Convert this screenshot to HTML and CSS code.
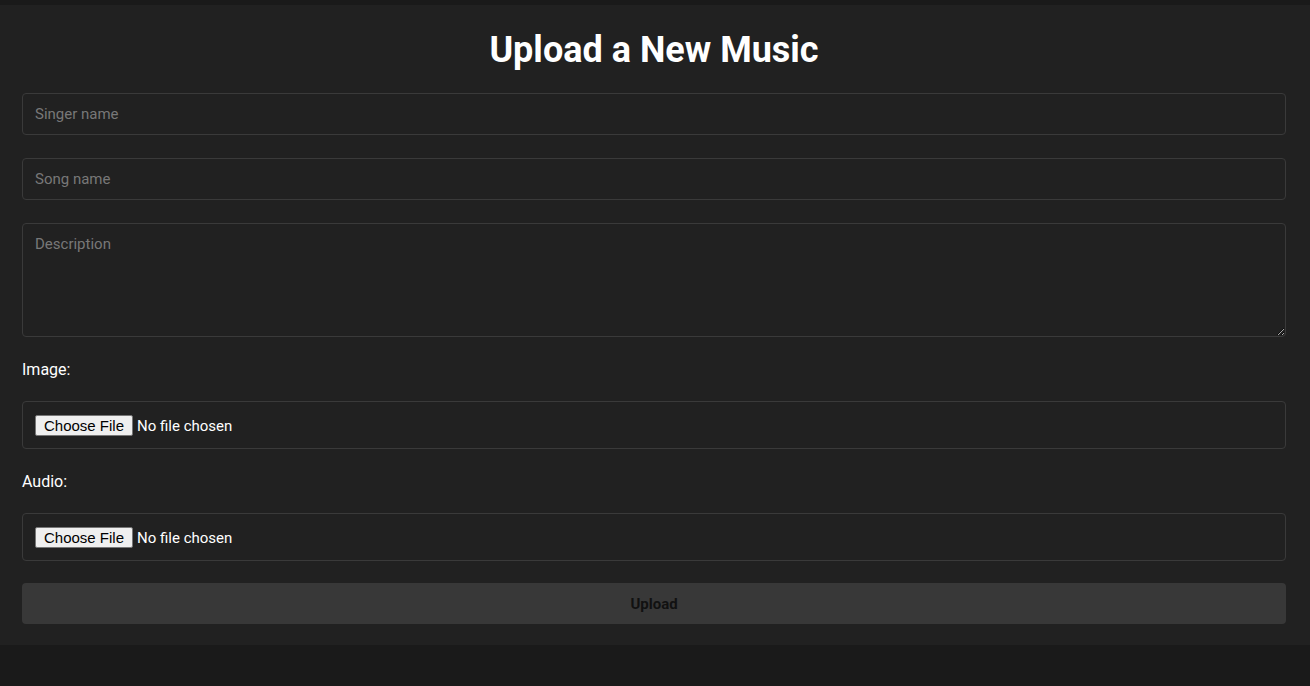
FILE: index.html
```html
<!DOCTYPE html>
<html lang="en">
<head>
<meta charset="utf-8">
<title>Upload a New Music</title>
<link rel="stylesheet" href="styles.css">
</head>
<body>
<main class="panel">
  <h1 class="title">Upload a New Music</h1>
  <form class="form">
    <input class="field" type="text" placeholder="Singer name">
    <input class="field" type="text" placeholder="Song name">
    <textarea class="field area" placeholder="Description"></textarea>
    <label class="label" for="img">Image:</label>
    <div class="filebox"><input id="img" class="file" type="file"></div>
    <label class="label" for="aud">Audio:</label>
    <div class="filebox"><input id="aud" class="file" type="file"></div>
    <button class="submit" type="button">Upload</button>
  </form>
</main>
</body>
</html>
```
FILE: styles.css
```css
html, body {
  margin: 0;
  padding: 0;
  background: #1a1a1a;
  font-family: Roboto, "Noto Sans", Arial, sans-serif;
  color: #ffffff;
}
.panel {
  margin-top: 5px;
  background: #212121;
  padding: 24px 24px 21px 22px;
}
.title {
  margin: 0 0 22px;
  text-align: center;
  font-size: 36px;
  font-weight: 700;
  line-height: 42px;
  color: #ffffff;
}
.form {
  display: flex;
  flex-direction: column;
  gap: 22px;
}
.field {
  box-sizing: border-box;
  width: 100%;
  height: 42px;
  margin: 0 0 1px;
  padding: 0 12px;
  background: #212121;
  border: 1px solid #3a3a3a;
  border-radius: 4px;
  color: #ffffff;
  font-family: Roboto, sans-serif;
  font-size: 15px;
  outline: none;
}
.field::placeholder {
  color: #787878;
}
.area {
  height: 114px;
  margin: 0;
  padding: 11px 12px;
  resize: vertical;
  display: block;
}
.label {
  font-size: 16px;
  line-height: 18px;
  padding-top: 2px;
  color: #ffffff;
  margin: 0;
}
.filebox {
  box-sizing: border-box;
  height: 48px;
  border: 1px solid #3a3a3a;
  border-radius: 4px;
  padding: 0 12px;
  display: flex;
  align-items: center;
}
.file {
  font-family: Roboto, sans-serif;
  font-size: 15px;
  color: #ffffff;
}
.file::file-selector-button {
  font-family: "Liberation Sans", Arial, sans-serif;
  font-size: 15px;
  background: #efefef;
  color: #000000;
  border: 1px solid #767676;
  border-radius: 2px;
  padding: 0 8px;
  height: 21px;
  margin-right: 4px;
}
.submit {
  height: 41px;
  border: none;
  border-radius: 4px;
  background: #383838;
  color: #111111;
  font-family: Roboto, sans-serif;
  font-weight: 700;
  font-size: 15px;
}
```
